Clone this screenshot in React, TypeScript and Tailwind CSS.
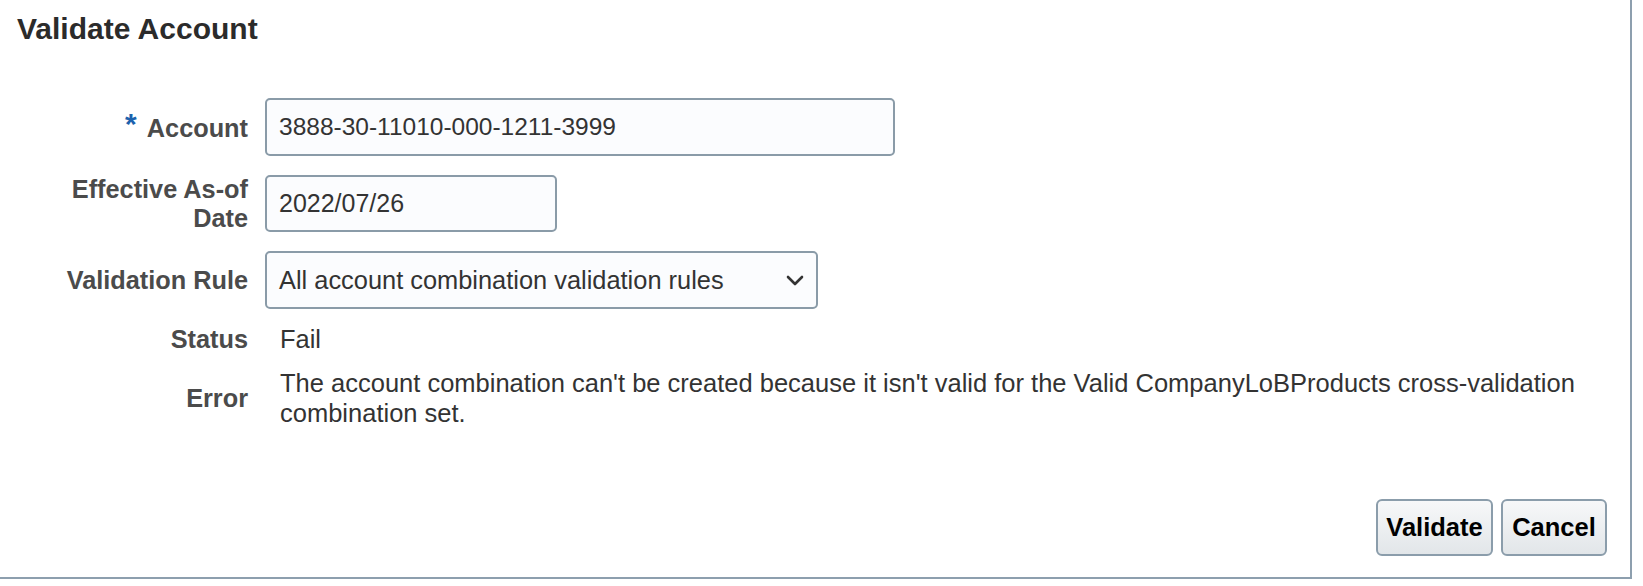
import React from "react";

const font = { fontFamily: "'Liberation Sans', Arial, Helvetica, sans-serif" };

function Label({ children }: { children: React.ReactNode }) {
  return (
    <div className="w-[248px] shrink-0 text-right text-[25.3px] font-bold text-[#4b4b4b] leading-[29px]">
      {children}
    </div>
  );
}

export default function App() {
  return (
    <div className="w-[1643px] h-[586px] bg-white" style={font}>
      <div className="w-[1632px] h-[579px] border-r-2 border-b-2 border-[#8d9fae] flex flex-col">
        <div className="h-[44px] pt-[14px] pl-[17px] text-[30px] leading-none font-bold text-[#2b2b2b]">
          Validate Account
        </div>

        <div className="mt-[54px] flex flex-col">
          {/* Account */}
          <div className="flex items-center h-[58px]">
            <Label>
              <span className="text-[#1d62ad] text-[30px] relative top-[-3px] mr-[4px]">*</span> Account
            </Label>
            <div className="ml-[17px] w-[630px] h-[58px] border-2 border-[#8a9ba8] rounded-[5px] bg-[#fbfcfe] flex items-center pl-[12px] text-[24.5px] text-[#333333]">
              3888-30-11010-000-1211-3999
            </div>
          </div>

          {/* Effective As-of Date */}
          <div className="flex items-center h-[57px] mt-[19px]">
            <Label>
              Effective As-of
              <br />
              Date
            </Label>
            <div className="ml-[17px] w-[292px] h-[57px] border-2 border-[#8a9ba8] rounded-[5px] bg-[#fbfcfe] flex items-center pl-[12px] text-[25px] text-[#333333]">
              2022/07/26
            </div>
          </div>

          {/* Validation Rule */}
          <div className="flex items-center h-[58px] mt-[19px]">
            <Label>Validation Rule</Label>
            <div className="ml-[17px] w-[553px] h-[58px] border-2 border-[#8a9ba8] rounded-[5px] bg-[#fbfcfe] flex items-center justify-between pl-[12px] pr-[12px] text-[25.4px] text-[#333333]">
              <span>All account combination validation rules</span>
              <svg width="18" height="13" viewBox="0 0 18 13" fill="none">
                <path d="M2 3 L9 10 L16 3" stroke="#333333" strokeWidth="2.6" strokeLinecap="round" strokeLinejoin="round" />
              </svg>
            </div>
          </div>

          {/* Status */}
          <div className="flex items-start mt-[15px] h-[30px]">
            <div className="w-[248px] shrink-0 text-right text-[25.3px] font-bold text-[#4b4b4b] leading-[30px]">
              Status
            </div>
            <div className="ml-[32px] text-[25.4px] leading-[30px] text-[#333333]">Fail</div>
          </div>

          {/* Error */}
          <div className="flex items-center mt-[14px]">
            <div className="w-[248px] shrink-0 text-right text-[25.3px] font-bold text-[#4b4b4b] leading-[30px]">
              Error
            </div>
            <div className="ml-[32px] w-[1330px] text-[25.5px] leading-[30px] text-[#333333]">
              The account combination can't be created because it isn't valid for the Valid CompanyLoBProducts cross-validation combination set.
            </div>
          </div>
        </div>

        <div className="mt-auto pb-[21px] pr-[23px] flex justify-end gap-[8px]">
          <button className="w-[117px] h-[57px] border-2 border-[#8b9dab] rounded-[6px] bg-gradient-to-b from-[#f7f8f9] to-[#e2e6e9] text-[25.5px] font-bold text-black">
            Validate
          </button>
          <button className="w-[106px] h-[57px] border-2 border-[#8b9dab] rounded-[6px] bg-gradient-to-b from-[#f7f8f9] to-[#e2e6e9] text-[25.5px] font-bold text-black">
            Cancel
          </button>
        </div>
      </div>
    </div>
  );
}
